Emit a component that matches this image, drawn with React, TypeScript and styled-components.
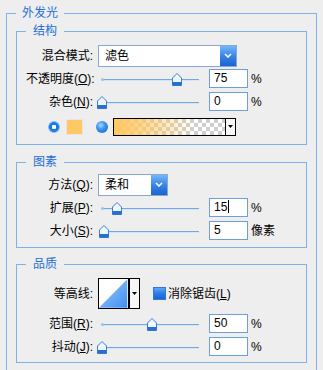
import React from "react";
import styled, { createGlobalStyle } from "styled-components";

const GlobalStyle = createGlobalStyle`
    html, body {
        margin: 0;
        padding: 0;
        background: #eeeeee;
        overflow: hidden;
    }
    body {
        font-family: "Liberation Sans", "Noto Sans CJK SC", sans-serif;
        font-size: 12px;
        color: #000;
    }
`;

const Panel = styled.section`
    position: relative;
    margin: 13px 0 0 6px;
    width: 311px;
    box-sizing: border-box;
    border: 1px solid #7eb2e8;
    padding: 17px 9px 30px;
`;

const Group = styled.section<{ $mt: number; $pt: number; $pb: number }>`
    position: relative;
    margin-top: ${(p) => p.$mt}px;
    border: 1px solid #7eb2e8;
    padding: ${(p) => p.$pt}px 0 ${(p) => p.$pb}px 9px;
`;

const Title = styled.span<{ $left: number; $pad: number }>`
    position: absolute;
    top: -9px;
    left: ${(p) => p.$left}px;
    padding: 0 ${(p) => p.$pad}px;
    background: #eeeeee;
    color: #1f6fd6;
    font-size: 12px;
    line-height: 16px;
`;

const Row = styled.div<{ $h?: number; $mt?: number }>`
    display: flex;
    align-items: center;
    height: ${(p) => p.$h ?? 23}px;
    margin-top: ${(p) => p.$mt ?? 0}px;
`;

const Label = styled.span`
    width: 67px;
    margin-right: 5px;
    text-align: right;
    white-space: nowrap;
    line-height: 16px;
`;

const Select = styled.div<{ $w: number }>`
    width: ${(p) => p.$w}px;
    height: 22px;
    box-sizing: border-box;
    border: 1px solid #86a8d2;
    background: #fff;
    display: flex;
    align-items: stretch;
`;

const SelectText = styled.span`
    flex: 1;
    padding-left: 6px;
    line-height: 20px;
`;

const SelectButton = styled.span`
    width: 16px;
    background: linear-gradient(#74b6f8, #3381e6 55%, #1c63cf);
    display: flex;
    align-items: center;
    justify-content: center;
`;

const SliderBox = styled.div`
    position: relative;
    width: 101px;
    height: 14px;
    margin-right: 10px;
`;

const Track = styled.div`
    position: absolute;
    left: 4px;
    right: 0;
    top: 7px;
    height: 1px;
    background: #74a9e0;
    box-shadow: 0 1px 0 #d4e5f6;
    &::before {
        content: "";
        position: absolute;
        left: -1px;
        top: -1px;
        width: 3px;
        height: 3px;
        border-radius: 50%;
        background: #9cc3ea;
    }
`;

const Thumb = styled.svg`
    position: absolute;
    top: 1px;
`;

const Field = styled.div`
    width: 39px;
    height: 19px;
    box-sizing: border-box;
    border: 1px solid #6c9fd8;
    background: #fff;
    padding-left: 4px;
    line-height: 17px;
    font-size: 12px;
`;

const Caret = styled.span`
    display: inline-block;
    width: 1px;
    height: 13px;
    background: #000;
    vertical-align: -2px;
    margin-left: 1px;
`;

const Unit = styled.span`
    margin-left: 3px;
    line-height: 16px;
`;

const ColorRow = styled(Row)`
    padding-left: 22px;
`;

const Radio = styled.span<{ $on?: boolean }>`
    width: 12px;
    height: 12px;
    border-radius: 50%;
    flex: none;
    background: ${(p) =>
        p.$on
            ? "radial-gradient(circle at 40% 35%, #a9d6ff 0, #3b93f2 40%, #0e5fd0 100%)"
            : "radial-gradient(circle, #fff 0 2px, #1c7ae6 2.5px 4.6px, #7fbdf8 5.2px 6px)"};
`;

const Swatch = styled.span`
    width: 17px;
    height: 16px;
    box-sizing: border-box;
    border: 1px solid #e6e6e6;
    background: #ffc862;
    margin: 0 13px 0 6px;
`;

const GradientBox = styled.div`
    width: 123px;
    height: 18px;
    box-sizing: border-box;
    border: 1px solid #000;
    margin-left: 5px;
    display: flex;
`;

const GradientPreview = styled.span`
    flex: 1;
    background:
        linear-gradient(to right, #ffc862 0%, rgba(255, 200, 98, 0.75) 25%, rgba(255, 200, 98, 0) 72%),
        repeating-conic-gradient(#cfcfcf 0 25%, #ffffff 0 50%) 0 0 / 8px 8px;
`;

const ArrowPart = styled.span`
    width: 9px;
    border-left: 1px solid #000;
    background: #f6f6f6;
    display: flex;
    align-items: center;
    justify-content: center;
`;

const ContourBox = styled.div`
    width: 42px;
    height: 31px;
    box-sizing: border-box;
    border: 1px solid #000;
    display: flex;
    background: #fff;
`;

const ContourPreview = styled.svg`
    border-right: 1px solid #000;
`;

const Check = styled.span`
    width: 13px;
    height: 13px;
    box-sizing: border-box;
    margin-left: 13px;
    border: 1px solid #2f7ad8;
    background: linear-gradient(#5aa6f6, #2a7be6 50%, #1a66d2);
`;

const CheckText = styled.span`
    margin-left: 2px;
    line-height: 16px;
`;

const Chevron = () => (
    <svg width="8" height="5" viewBox="0 0 8 5">
        <polyline points="1,1 4,4 7,1" fill="none" stroke="#fff" strokeWidth="1.6" />
    </svg>
);

const DownTriangle = () => (
    <svg width="5" height="3" viewBox="0 0 5 3">
        <polygon points="0,0 5,0 2.5,3" fill="#000" />
    </svg>
);

const Slider = ({ pct }: { pct: number }) => (
    <SliderBox>
        <Track />
        <Thumb width="10" height="13" viewBox="0 0 10 13" style={{ left: 4 + pct - 5 }}>
            <path d="M0.5 5 L5 0.5 L9.5 5 V12.5 H0.5 Z" fill="#eef6ff" stroke="#3b7fd6" />
            <rect x="0.5" y="9" width="9" height="3.5" fill="#2a6fd0" />
        </Thumb>
    </SliderBox>
);

interface ISliderRow {
    label: React.ReactNode;
    pct: number;
    value: React.ReactNode;
    unit: string;
}

const SliderRow = ({ label, pct, value, unit }: ISliderRow) => (
    <Row>
        <Label>{label}</Label>
        <Slider pct={pct} />
        <Field>{value}</Field>
        <Unit>{unit}</Unit>
    </Row>
);

export default function App() {
    return (
        <>
            <GlobalStyle />
            <Panel>
                <Title $left={9} $pad={6}>外发光</Title>
                <Group $mt={0} $pt={12} $pb={6}>
                    <Title $left={9} $pad={7}>结构</Title>
                    <Row>
                        <Label>混合模式:</Label>
                        <Select $w={139}>
                            <SelectText>滤色</SelectText>
                            <SelectButton><Chevron /></SelectButton>
                        </Select>
                    </Row>
                    <SliderRow label={<>不透明度(<u>O</u>):</>} pct={75} value="75" unit="%" />
                    <SliderRow label={<>杂色(<u>N</u>):</>} pct={0} value="0" unit="%" />
                    <ColorRow $mt={2}>
                        <Radio />
                        <Swatch />
                        <Radio $on />
                        <GradientBox>
                            <GradientPreview />
                            <ArrowPart><DownTriangle /></ArrowPart>
                        </GradientBox>
                    </ColorRow>
                </Group>
                <Group $mt={17} $pt={10} $pb={5}>
                    <Title $left={9} $pad={7}>图素</Title>
                    <Row>
                        <Label>方法(<u>Q</u>):</Label>
                        <Select $w={70}>
                            <SelectText>柔和</SelectText>
                            <SelectButton><Chevron /></SelectButton>
                        </Select>
                    </Row>
                    <SliderRow label={<>扩展(<u>P</u>):</>} pct={15} value={<>15<Caret /></>} unit="%" />
                    <SliderRow label={<>大小(<u>S</u>):</>} pct={2} value="5" unit="像素" />
                </Group>
                <Group $mt={16} $pt={10} $pb={4}>
                    <Title $left={9} $pad={7}>品质</Title>
                    <Row $h={37}>
                        <Label>等高线:</Label>
                        <ContourBox>
                            <ContourPreview width="30" height="29" viewBox="0 0 30 29">
                                <defs>
                                    <linearGradient id="contourFill" x1="0" y1="0" x2="1" y2="1">
                                        <stop offset="0" stopColor="#9ccdff" />
                                        <stop offset="1" stopColor="#3f8ff0" />
                                    </linearGradient>
                                </defs>
                                <polygon points="0,29 29,0 29,29" fill="url(#contourFill)" />
                            </ContourPreview>
                            <ArrowPart><DownTriangle /></ArrowPart>
                        </ContourBox>
                        <Check />
                        <CheckText>消除锯齿(<u>L</u>)</CheckText>
                    </Row>
                    <SliderRow label={<>范围(<u>R</u>):</>} pct={50} value="50" unit="%" />
                    <SliderRow label={<>抖动(<u>J</u>):</>} pct={0} value="0" unit="%" />
                </Group>
            </Panel>
        </>
    );
}
